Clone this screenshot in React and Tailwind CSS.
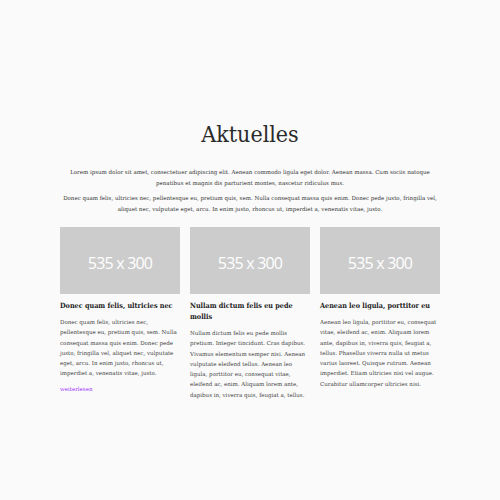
export default function App() {
  const cards = [
    {
      title: "Donec quam felis, ultricies nec",
      body: "Donec quam felis, ultricies nec, pellentesque eu, pretium quis, sem. Nulla consequat massa quis enim. Donec pede justo, fringilla vel, aliquet nec, vulputate eget, arcu. In enim justo, rhoncus ut, imperdiet a, venenatis vitae, justo.",
      link: true,
    },
    {
      title: "Nullam dictum felis eu pede mollis",
      body: "Nullam dictum felis eu pede mollis pretium. Integer tincidunt. Cras dapibus. Vivamus elementum semper nisi. Aenean vulputate eleifend tellus. Aenean leo ligula, porttitor eu, consequat vitae, eleifend ac, enim. Aliquam lorem ante, dapibus in, viverra quis, feugiat a, tellus.",
    },
    {
      title: "Aenean leo ligula, porttitor eu",
      body: "Aenean leo ligula, porttitor eu, consequat vitae, eleifend ac, enim. Aliquam lorem ante, dapibus in, viverra quis, feugiat a, tellus. Phasellus viverra nulla ut metus varius laoreet. Quisque rutrum. Aenean imperdiet. Etiam ultricies nisi vel augue. Curabitur ullamcorper ultricies nisi.",
    },
  ];
  return (
    <div className="w-[500px] h-[500px] bg-[#fafafa] flex flex-col items-center pt-[118px] text-[#333]" style={{ fontFamily: '"DejaVu Serif", serif' }}>
      <h1 className="text-[23px] leading-[32px] text-[#2b2b2b] font-stretch-condensed">Aktuelles</h1>
      <div className="w-[380px] mt-[17px] text-center text-[5.5px] leading-[11px] text-[#333]">
        <p>Lorem ipsum dolor sit amet, consectetuer adipiscing elit. Aenean commodo ligula eget dolor. Aenean massa. Cum sociis natoque penatibus et magnis dis parturient montes, nascetur ridiculus mus.</p>
        <p className="mt-[4px]">Donec quam felis, ultricies nec, pellentesque eu, pretium quis, sem. Nulla consequat massa quis enim. Donec pede justo, fringilla vel, aliquet nec, vulputate eget, arcu. In enim justo, rhoncus ut, imperdiet a, venenatis vitae, justo.</p>
      </div>
      <div className="w-[380px] mt-[12px] grid grid-cols-3 gap-[10px]">
        {cards.map((c, i) => (
          <div key={i} className="flex flex-col">
            <div className="h-[67px] bg-[#cccccc] flex items-center justify-center pt-[5px]">
              <span className="text-white text-[16px] font-normal tracking-[-0.8px]" style={{ fontFamily: '"Open Sans", sans-serif' }}>535 x 300</span>
            </div>
            <h3 className="mt-[6px] text-[7.2px] leading-[11px] font-bold text-[#222] font-stretch-condensed">{c.title}</h3>
            <p className="mt-[6px] text-[5.5px] leading-[10.3px] text-[#3f3f3f]">{c.body}</p>
            {c.link && <a className="mt-[5px] text-[5.5px] leading-[11px] text-[#9b30ff]">weiterlesen</a>}
          </div>
        ))}
      </div>
    </div>
  );
}
